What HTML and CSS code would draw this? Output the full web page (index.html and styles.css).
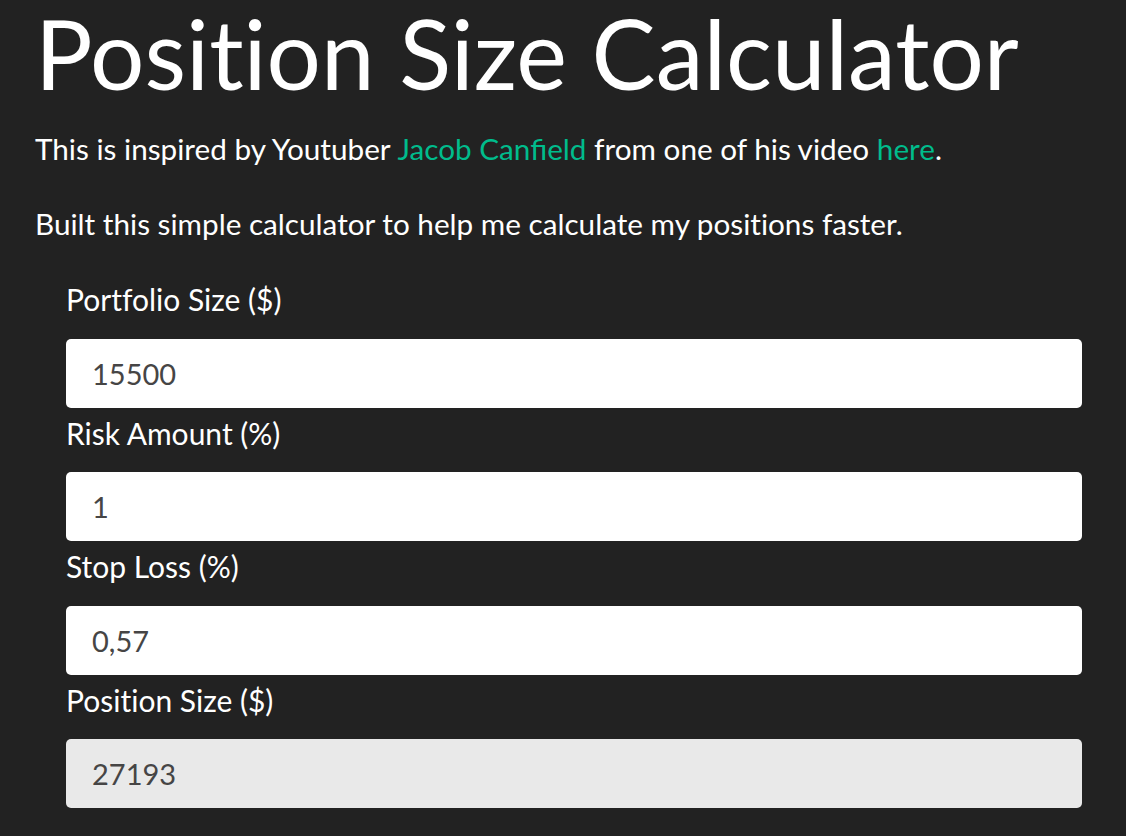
FILE: index.html
```html
<!DOCTYPE html>
<html lang="en">
<head>
<meta charset="utf-8">
<title>Position Size Calculator</title>
<link rel="stylesheet" href="styles.css">
</head>
<body>
<main class="page">
  <h1 class="title">Position Size Calculator</h1>
  <p class="intro">This is inspired by Youtuber <a href="#" class="link">Jacob Canfield</a> from one of his video <a href="#" class="link">here</a>.</p>
  <p class="intro">Built this simple calculator to help me calculate my positions faster.</p>
  <form class="calc">
    <div class="field">
      <label class="label" for="portfolio">Portfolio Size ($)</label>
      <input class="input" id="portfolio" type="text" value="15500">
    </div>
    <div class="field">
      <label class="label" for="risk">Risk Amount (%)</label>
      <input class="input" id="risk" type="text" value="1">
    </div>
    <div class="field">
      <label class="label" for="stop">Stop Loss (%)</label>
      <input class="input" id="stop" type="text" value="0,57">
    </div>
    <div class="field">
      <label class="label" for="position">Position Size ($)</label>
      <input class="input input-disabled" id="position" type="text" value="27193" disabled>
    </div>
  </form>
</main>
</body>
</html>
```
FILE: styles.css
```css
html, body {
  margin: 0;
  padding: 0;
  background: #222222;
}
body {
  font-family: Lato, "Open Sans", sans-serif;
  color: #ffffff;
  font-variant-ligatures: no-common-ligatures;
}
.page {
  padding: 0 44px 0 35px;
}
.title {
  margin: 0 0 18px 0;
  font-size: 96px;
  font-weight: 400;
  line-height: 106px;
}
.intro {
  margin: 0 0 26px 0;
  font-size: 29.7px;
  line-height: 49px;
}
.link {
  color: #00bc8c;
  text-decoration: none;
  font-variant-ligatures: common-ligatures;
}
.calc {
  margin-top: 2px;
  padding-left: 31px;
  display: flex;
  flex-direction: column;
}
.field {
  display: flex;
  flex-direction: column;
}
.label {
  font-size: 30px;
  line-height: 45px;
  margin: 3px 0 16.5px 0;
}
.input {
  box-sizing: border-box;
  height: 69px;
  border: none;
  border-radius: 5px;
  background: #ffffff;
  color: #464545;
  font-family: Lato, "Open Sans", sans-serif;
  font-size: 29px;
  padding: 0 26px;
  margin: 0;
}
.input-disabled {
  background: #e9e9e9;
  color: #464545;
  -webkit-text-fill-color: #464545;
  opacity: 1;
}
```
